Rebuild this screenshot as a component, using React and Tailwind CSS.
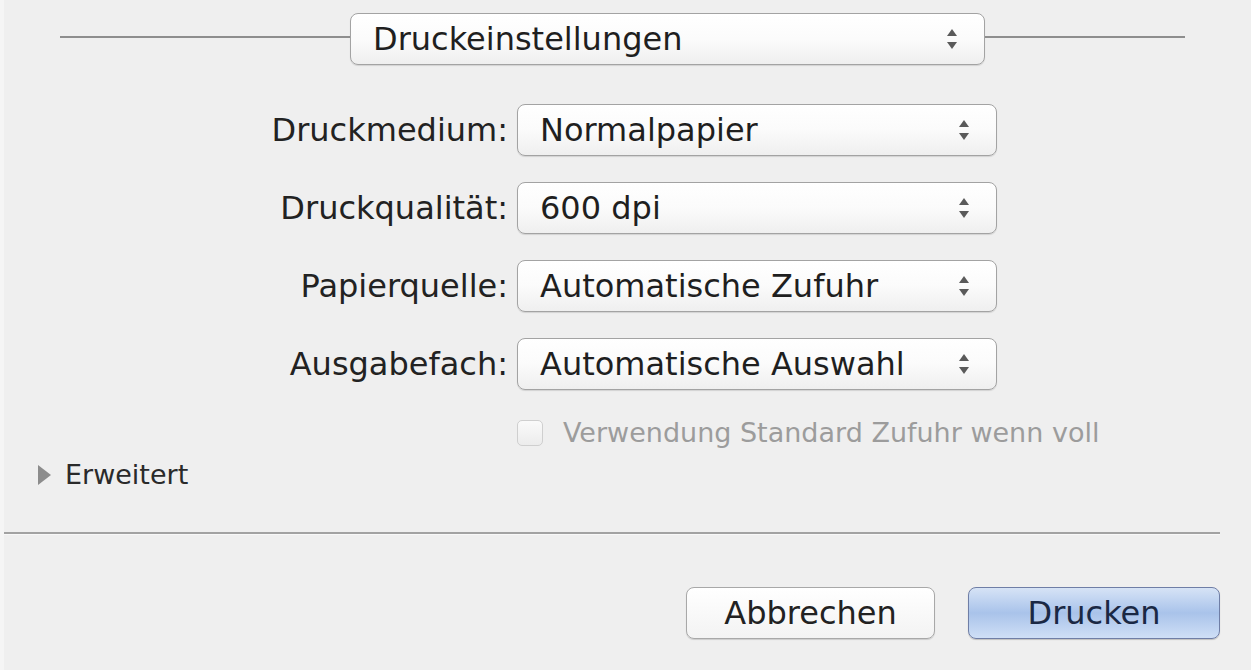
const ROWS = [
  { label: "Druckmedium:", value: "Normalpapier" },
  { label: "Druckqualität:", value: "600 dpi" },
  { label: "Papierquelle:", value: "Automatische Zufuhr" },
  { label: "Ausgabefach:", value: "Automatische Auswahl" },
];

const Stepper = () => (
  <svg width="12" height="24" viewBox="0 0 12 24" className="shrink-0">
    <path d="M6 2 L11 9 L1 9 Z" fill="#5a5a5a" />
    <path d="M6 22 L11 15 L1 15 Z" fill="#5a5a5a" />
  </svg>
);

const PopUp = ({ value, className }) => (
  <div
    className={`h-[52px] flex items-center justify-between pl-[22px] pr-[26px] rounded-[8px] border-[1.5px] border-[#a3a3a3] bg-gradient-to-b from-white via-[#fbfbfb] to-[#efefef] shadow-[0_1px_1px_rgba(0,0,0,0.12)] text-[#1f1f1f] ${className}`}
  >
    <span className="leading-none">{value}</span>
    <Stepper />
  </div>
);

const App = () => {
  return (
    <div className="w-[1251px] h-[670px] bg-[#efefef] border-l-[4px] border-l-[#f5f5f5] font-['DejaVu_Sans',sans-serif] text-[32px] flex flex-col overflow-hidden">
      {/* Panel selector with rules */}
      <div className="flex items-center pt-[13px] shrink-0">
        <div className="ml-[56px] w-[290px] h-[2px] bg-[#8e8e8e] -mt-[5px]" />
        <PopUp value="Druckeinstellungen" className="w-[635px]" />
        <div className="w-[200px] h-[2px] bg-[#8e8e8e] -mt-[5px]" />
      </div>

      {/* Settings rows */}
      <div className="grid grid-cols-[504px_480px] gap-x-[9px] gap-y-[26px] mt-[39px] shrink-0">
        {ROWS.map((row) => (
          <div key={row.label} className="contents">
            <div className="flex items-center justify-end text-[#222]">{row.label}</div>
            <PopUp value={row.value} />
          </div>
        ))}
        <div />
        <div className="flex items-center gap-[20px] -mt-[3px] text-[27px] text-[#9c9c9c] whitespace-nowrap">
          <div className="w-[26px] h-[26px] shrink-0 rounded-[5px] border-[1.5px] border-[#cfcfcf] bg-gradient-to-b from-[#fafafa] to-[#ececec]" />
          <span>Verwendung Standard Zufuhr wenn voll</span>
        </div>
      </div>

      {/* Disclosure */}
      <div className="flex items-center gap-[14px] ml-[34px] mt-[1px] text-[27px] text-[#2a2a2a] shrink-0">
        <svg width="13" height="20" viewBox="0 0 13 20">
          <path d="M0 0 L13 10 L0 20 Z" fill="#8c8c8c" />
        </svg>
        <span>Erweitert</span>
      </div>

      {/* Separator */}
      <div className="mt-[37px] w-[1216px] h-[3px] shrink-0 bg-[#a2a2a2] border-b border-b-[#f8f8f8]" />

      {/* Buttons */}
      <div className="flex justify-end gap-[33px] mt-[52px] w-[1216px] shrink-0">
        <button className="w-[249px] h-[52px] rounded-[8px] border-[1.5px] border-[#a8a8a8] bg-gradient-to-b from-white to-[#f3f3f3] shadow-[0_1px_1px_rgba(0,0,0,0.15)] text-[#222]">
          Abbrechen
        </button>
        <button className="w-[252px] h-[52px] rounded-[8px] border-[1.5px] border-[#6f7ea6] bg-gradient-to-b from-[#d6e3f6] via-[#a9c3ea] to-[#cfdff6] shadow-[0_1px_1px_rgba(0,0,0,0.2)] text-[#1a2844]">
          Drucken
        </button>
      </div>
    </div>
  );
};

export default App;
